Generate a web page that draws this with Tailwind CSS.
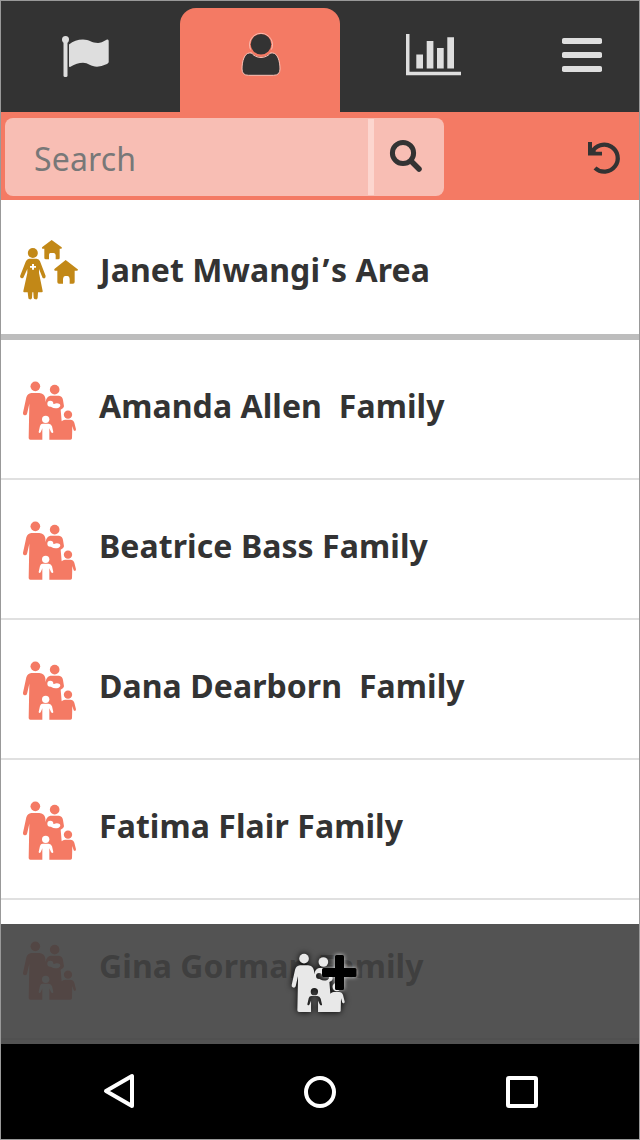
<!DOCTYPE html>
<html lang="en">
<head>
<meta charset="utf-8">
<title>Families</title>
<script src="https://cdn.jsdelivr.net/npm/@tailwindcss/browser@4"></script>
</head>
<body class="bg-white font-['Noto_Sans',sans-serif] text-[#333333]">
<svg class="absolute size-0">
  <defs>
    <mask id="cut" maskUnits="userSpaceOnUse" x="0" y="0" width="240" height="240">
      <rect width="240" height="240" fill="white"/>
      <g fill="black" stroke="none">
        <circle cx="121" cy="101" r="9"/>
        <path d="M118 103L132 102Q141 98 149 102Q154 108 146 113Q134 117 124 111Z"/>
        <circle cx="107" cy="148" r="11"/>
        <path d="M98 161H116Q123 161 126 169L130 187Q127 192 123 186L118 175V212H97V175L92 187Q87 191 86 186L90 168Q92 161 98 161Z"/>
      </g>
    </mask>
    <symbol id="family" viewBox="0 0 240 240">
      <g mask="url(#cut)">
        <circle cx="76" cy="49" r="14.500"/>
        <circle cx="134" cy="59" r="14.500"/>
        <circle cx="174" cy="134" r="12.500"/>
        <path d="M64 69H88Q103 70 106 85L107 96Q109 79 121 77H147Q157 78 159 90L162 109Q162 115 152 119L155 154Q159 149 165 149H181Q190 149 193 158L198 178Q197 186 191 181L187 168L186 205Q186 209 181 209H61Q56 209 56 204L58 101L51 132Q48 138 42 135Q38 133 39 128L49 82Q53 70 64 69Z"/>
      </g>
    </symbol>
  </defs>
</svg>
<div class="relative flex h-[1140px] w-[640px] flex-col overflow-hidden">
  <header class="grid h-28 shrink-0 grid-cols-[180px_160px_180px_120px] bg-[#333333] pt-2">
    <div><svg class="h-[104px] w-[180px]" viewBox="0 8 180 104" fill="#dedede"><circle cx="65.500" cy="39.500" r="3.500"/><rect x="63.500" y="39" width="4" height="38" rx="1.500"/><path d="M69 44.500Q75 39.500 83 39.500C89 39.500 92 43 98 43Q101 43 107 39.500Q108.700 39 108.700 41V62Q108.700 63 107 64Q101 66.700 97 66.700C91 66.700 88 62.800 83 62.800Q77 62.800 70.500 66.700Q69 67.500 69 66Z"/></svg></div>
    <div class="rounded-t-2xl bg-[#f47a64]"><svg class="h-[104px] w-[160px]" viewBox="180 8 160 104" fill="#333333" stroke="#fbc2b7" stroke-width="1"><path d="M249.500 53H272.500C277.500 53 280 61 280 69Q280 75.300 273.500 75.300H248.500Q242 75.300 242 69C242 61 244.500 53 249.500 53Z"/><circle cx="261" cy="44.500" r="11" stroke="#f47a64" stroke-width="3"/><path d="M250.500 49.500A11.500 11.500 0 1 1 271.500 49.500" fill="none" stroke-width=".9"/><path d="M251 52.500A12.500 12.500 0 0 0 271 52.500" fill="none" stroke-width="1"/><circle cx="261" cy="44.300" r="10.300" stroke="none"/></svg></div>
    <div><svg class="h-[104px] w-[180px]" viewBox="340 8 180 104" fill="#dedede"><path d="M406 34H409.500V71.800H461V75.200H406ZM416.300 54.500H423V68.500H416.300ZM426.700 41H433.400V68.500H426.700ZM437 48H443.700V68.500H437ZM447.300 37.300H454V68.500H447.300Z"/></svg></div>
    <div><svg class="h-[104px] w-[120px]" viewBox="520 8 120 104" fill="#dedede"><rect x="562" y="38" width="40" height="6" rx="1.800"/><rect x="562" y="52" width="40" height="6" rx="1.800"/><rect x="562" y="66" width="40" height="6" rx="1.800"/></svg></div>
  </header>
  <div class="flex h-22 shrink-0 items-start justify-between bg-[#f47a64] pt-1.5 pr-4 pl-[5px]">
    <div class="flex h-[78px] w-[439px] overflow-hidden rounded-lg bg-[#f8beb4]">
      <div class="w-[363px] pt-[17px] pl-[29px] text-[32px]/12 tracking-[0.15px] text-[#787878]">Search</div>
      <div class="my-px w-1.5 bg-[#fcd6cf]"></div>
      <svg class="h-[78px] w-[70px]" viewBox="374 118 70 78" fill="none" stroke="#333333"><circle cx="403" cy="153" r="10.600" stroke-width="5"/><path d="M412 162L419 169" stroke-width="5.500" stroke-linecap="round"/></svg>
    </div>
    <svg class="h-[78px] w-11" viewBox="580 118 44 78"><path d="M592 152.500A13.500 13.500 0 1 1 595 168" fill="none" stroke="#333333" stroke-width="4.200"/><path d="M588 142H592V147.500L596 151.800H602V155.600H588Z" fill="#333333"/></svg>
  </div>
  <main class="h-[940px] shrink-0 overflow-hidden text-[32px]/10 font-bold tracking-[0.07px]">
    <div class="flex h-[140px] items-start border-b-6 border-[#bdbdbd] pt-[30px] pl-2.5">
      <svg class="size-20 shrink-0" viewBox="0 0 240 240" fill="#c28817"><circle cx="68.500" cy="69" r="15"/><path fill-rule="evenodd" d="M57 86H80Q87 87 90 94L107 138Q107 148 98 144L87 117V129L98 183Q99 187 95 187H84L83 203Q82 209 77 208Q72 208 71 203L70 187H67L66 203Q65 209 60 208Q55 208 55 203L53 187H43Q39 187 40 183L52 129V117L40 143Q32 148 30 139L47 95Q50 87 57 86ZM66 102V108H60V113H66V119H72V113H78V108H72V102Z"/><path d="M125 30L155 52Q157 56 153 56H149V84Q149 88 145 88H137V75Q136 69 131 69H121Q117 69 117 75V88H108Q103 88 103 84V56H98Q94 55 97 51Z"/><path d="M167 90L202 117Q207 121 200 122H194V156Q194 161 189 161H179V147Q178 138 172 138H165Q160 138 159 147V161H147Q142 161 142 156V122H135Q130 121 134 116Z"/></svg>
      <span class="pt-5 pl-2.5 whitespace-pre">Janet Mwangi<span class="mr-[1.500px] ml-[2.500px] font-['Open_Sans']">’</span>s Area</span>
    </div>
    <div class="flex h-[140px] items-start border-b-2 border-[#e0e0e0] pt-[30px] pl-2.5"><svg class="size-20 shrink-0" fill="#f47a64"><use href="#family"/></svg><span class="pt-4 pl-[9px] whitespace-pre">Amanda Allen  Family</span></div>
    <div class="flex h-[140px] items-start border-b-2 border-[#e0e0e0] pt-[30px] pl-2.5"><svg class="size-20 shrink-0" fill="#f47a64"><use href="#family"/></svg><span class="pt-4 pl-[9px] whitespace-pre">Beatrice Bass Family</span></div>
    <div class="flex h-[140px] items-start border-b-2 border-[#e0e0e0] pt-[30px] pl-2.5"><svg class="size-20 shrink-0" fill="#f47a64"><use href="#family"/></svg><span class="pt-4 pl-[9px] whitespace-pre">Dana Dearborn  Family</span></div>
    <div class="flex h-[140px] items-start border-b-2 border-[#e0e0e0] pt-[30px] pl-2.5"><svg class="size-20 shrink-0" fill="#f47a64"><use href="#family"/></svg><span class="pt-4 pl-[9px] whitespace-pre">Fatima Flair Family</span></div>
    <div class="flex h-[140px] items-start border-b-2 border-[#e0e0e0] pt-[30px] pl-2.5"><svg class="size-20 shrink-0" fill="#f47a64"><use href="#family"/></svg><span class="pt-4 pl-[9px] whitespace-pre">Gina Gorman Family</span></div>
  </main>
  <footer class="absolute inset-x-0 bottom-0">
    <div class="h-[120px] bg-[#404040]/90">
      <svg class="h-[120px] w-full" viewBox="0 924 640 120">
        <g class="drop-shadow-[0_0_3px_rgb(0_0_0)]"><use href="#family" x="278.700" y="942.300" width="80" height="80" fill="#e8e8e8"/></g>
        <path class="drop-shadow-[0_0_2px_rgb(255_255_255/0.8)]" d="M336.500 955H342.500Q344 955 344 956.500V968H355Q356.500 968 356.500 969.500V975.500Q356.500 977 355 977H344V988.500Q344 990 342.500 990H336.500Q335 990 335 988.500V977H323.500Q322 977 322 975.500V969.500Q322 968 323.500 968H335V956.500Q335 955 336.500 955Z" fill="black"/>
      </svg>
    </div>
    <div class="h-24 bg-black"><svg class="h-24 w-full" viewBox="0 1044 640 96" fill="none" stroke="white" stroke-width="4" stroke-linejoin="round"><path d="M106 1091L132 1076V1106Z"/><circle cx="320" cy="1092" r="14"/><rect x="508" y="1078" width="28" height="28" rx="1"/></svg></div>
  </footer>
  <div class="pointer-events-none absolute inset-0 border border-[#999999]"></div>
</div>
</body>
</html>
